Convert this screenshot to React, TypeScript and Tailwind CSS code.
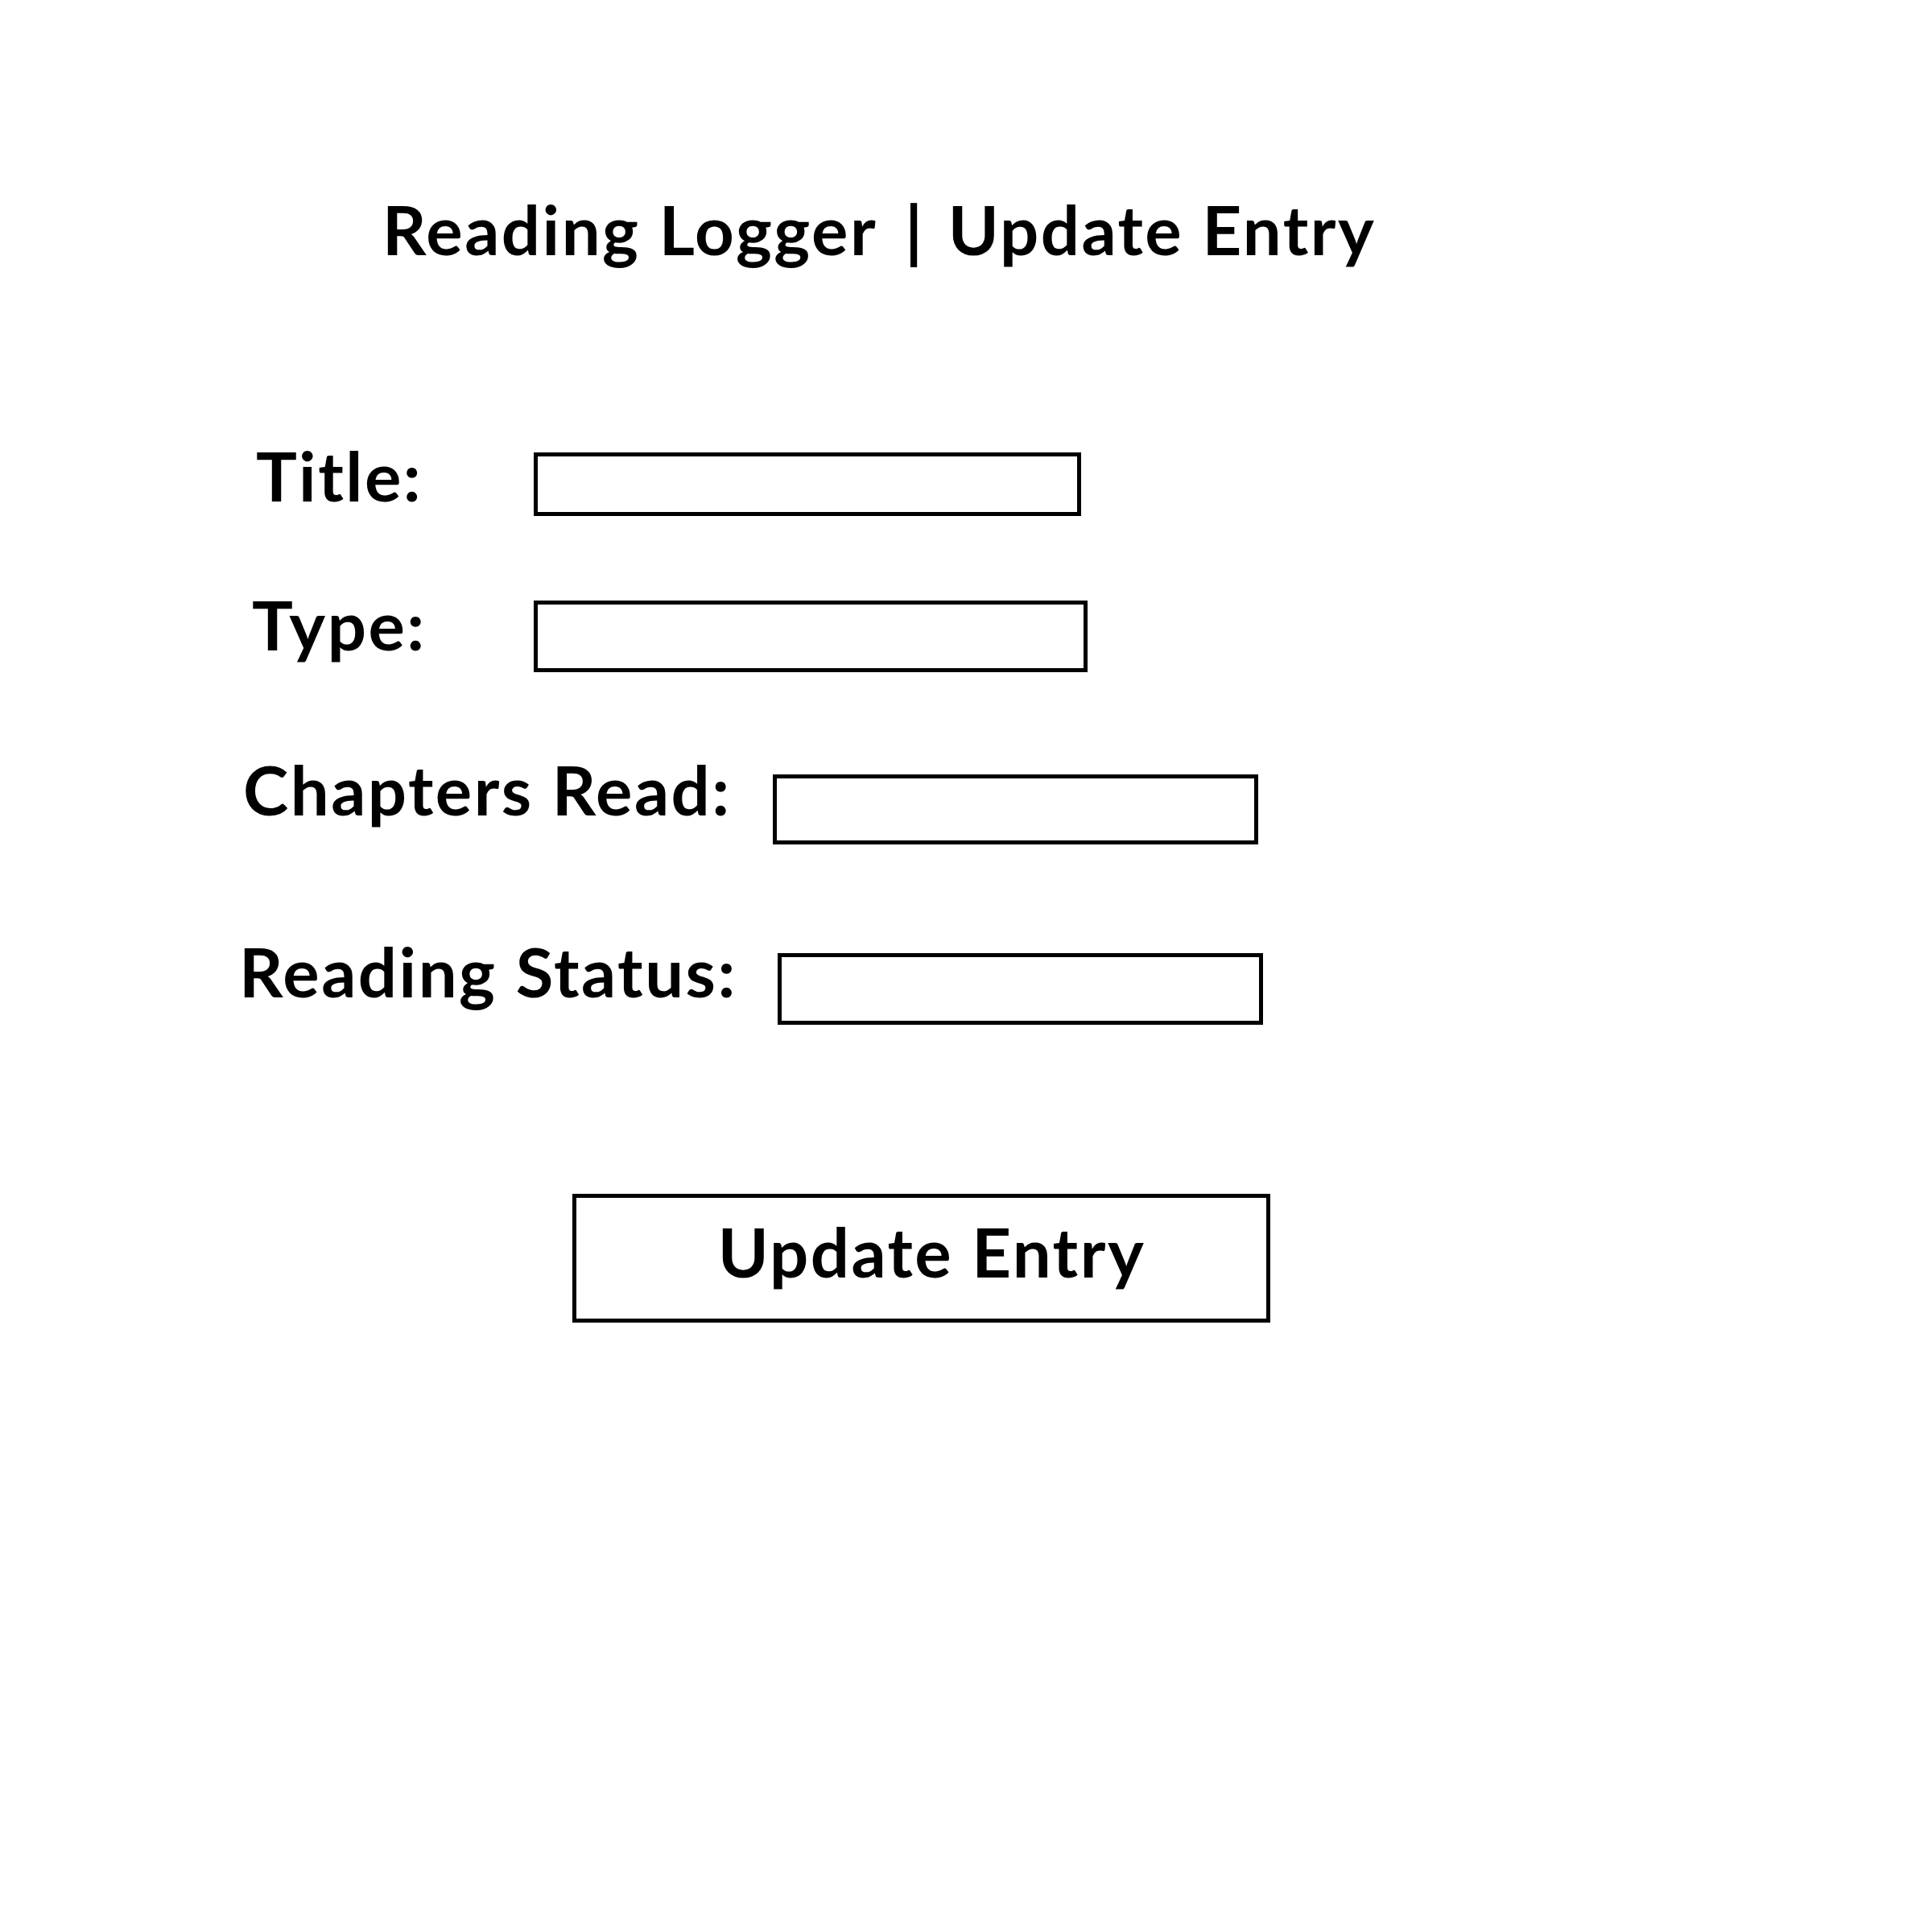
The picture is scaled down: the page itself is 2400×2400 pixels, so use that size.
const font = { fontFamily: "Lato, 'Open Sans', sans-serif" };

function Field({
  label,
  labelLeft,
  labelWidth,
  boxTop,
  boxWidth,
  boxHeight,
  top,
}: {
  label: string;
  labelLeft: string;
  labelWidth: string;
  boxTop: string;
  boxWidth: string;
  boxHeight: string;
  top: string;
}) {
  return (
    <div className={`flex items-start ${top}`}>
      <span className={`${labelLeft} ${labelWidth} shrink-0 whitespace-nowrap text-[85px] font-bold leading-none tracking-[2.5px] text-black`}>
        {label}
      </span>
      <div className={`${boxTop} ${boxWidth} ${boxHeight} shrink-0 border-[5px] border-black bg-white`}></div>
    </div>
  );
}

export default function App() {
  return (
    <div className="min-h-screen w-[2400px] bg-white text-black" style={font}>
      <div className="flex flex-col">
        {/* Heading */}
        <h1 className="mt-[242px] ml-[475px] whitespace-nowrap text-[85px] font-bold leading-none tracking-[2.5px]">
          Reading Logger<span className="ml-[34px] mr-[29px]">|</span>Update Entry
        </h1>

        {/* Form rows */}
        <Field
          label="Title:"
          labelLeft="ml-[318px]"
          labelWidth="w-[345px]"
          boxTop="mt-[14px]"
          boxWidth="w-[680px]"
          boxHeight="h-[79px]"
          top="mt-[221px]"
        />
        <Field
          label="Type:"
          labelLeft="ml-[313px]"
          labelWidth="w-[350px]"
          boxTop="mt-[13px]"
          boxWidth="w-[688px]"
          boxHeight="h-[89px]"
          top="mt-[92px]"
        />
        <Field
          label="Chapters Read:"
          labelLeft="ml-[302px]"
          labelWidth="w-[658px]"
          boxTop="mt-[24px]"
          boxWidth="w-[603px]"
          boxHeight="h-[87px]"
          top="mt-[103px]"
        />
        <Field
          label="Reading Status:"
          labelLeft="ml-[297px]"
          labelWidth="w-[669px]"
          boxTop="mt-[20px]"
          boxWidth="w-[603px]"
          boxHeight="h-[89px]"
          top="mt-[115px]"
        />

        {/* Button */}
        <button className="mt-[210px] ml-[711px] flex h-[160px] w-[867px] items-center justify-center border-[5px] border-black bg-white pl-[26px] pb-[17px] text-[85px] font-bold leading-none tracking-[2.5px] text-black">
          Update Entry
        </button>
      </div>
    </div>
  );
}
